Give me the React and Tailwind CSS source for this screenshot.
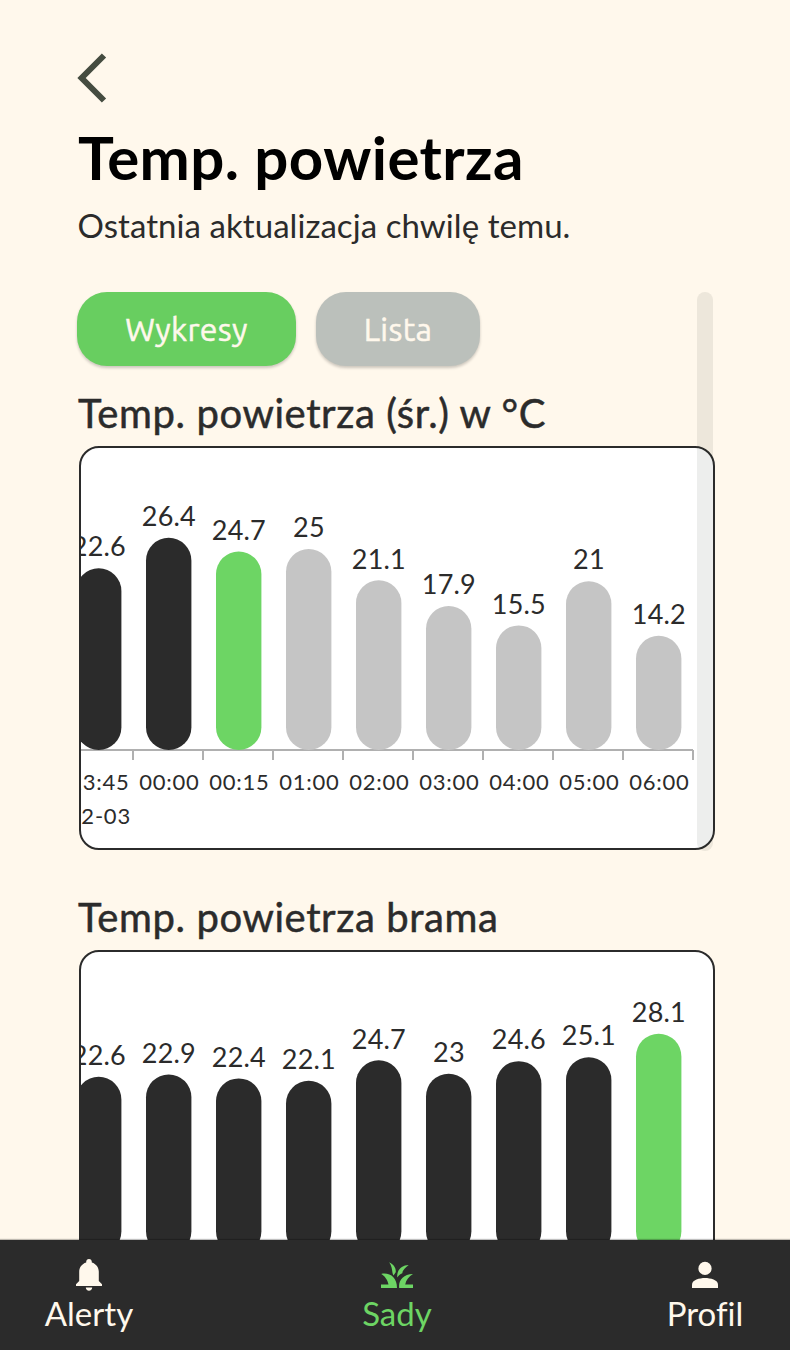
const DARK = '#2b2b2b';
const GREEN = '#6dd564';
const GREY = '#c5c5c5';

const averageTemps = [
  { value: 22.6, color: DARK, time: '23:45', date: '2022-03' },
  { value: 26.4, color: DARK, time: '00:00' },
  { value: 24.7, color: GREEN, time: '00:15' },
  { value: 25, color: GREY, time: '01:00' },
  { value: 21.1, color: GREY, time: '02:00' },
  { value: 17.9, color: GREY, time: '03:00' },
  { value: 15.5, color: GREY, time: '04:00' },
  { value: 21, color: GREY, time: '05:00' },
  { value: 14.2, color: GREY, time: '06:00' },
];

const gateTemps = [
  { value: 22.6, color: DARK },
  { value: 22.9, color: DARK },
  { value: 22.4, color: DARK },
  { value: 22.1, color: DARK },
  { value: 24.7, color: DARK },
  { value: 23, color: DARK },
  { value: 24.6, color: DARK },
  { value: 25.1, color: DARK },
  { value: 28.1, color: GREEN },
];

const BASE = 302;
const STEP = 70;

function BarChart({ data, max }) {
  return (
    <svg width="632" height="400" viewBox="0 0 632 400" className="block">
      <path d={`M0 ${BASE}H612`} stroke="#b0b0b0" strokeWidth="2" />
      {data.map((d, i) => {
        const cx = 17.7 + i * STEP;
        const h = (d.value / max) * 220.3;
        return (
          <g key={i} fill="#2b2b2b" textAnchor="middle">
            <path d={`M${52 + i * STEP} ${BASE}v10`} stroke="#b0b0b0" strokeWidth="2" />
            <rect x={cx - 22.7} y={BASE - h} width="45.4" height={h} rx="22.7" fill={d.color} />
            <text x={cx + 0.2} y={BASE - h - 11.8} className="text-[27px] tracking-[0.2px]">{d.value}</text>
            {d.time && <text x={cx + 0.7} y="342" className="text-[22px] tracking-[0.8px]">{d.time}</text>}
            {d.date && <text x={50} y="376" textAnchor="end" className="text-[22px] tracking-[0.8px]">{d.date}</text>}
          </g>
        );
      })}
    </svg>
  );
}

function ChartSection({ title, data, max }) {
  return (
    <section>
      <h2 className="h-[60px] pl-px text-[40px] leading-[54px] font-normal tracking-[0.59px] whitespace-nowrap [-webkit-text-stroke:0.5px_#2b2b2b]">{title}</h2>
      <div className="ml-[2px] h-[404px] w-[636px] overflow-hidden rounded-[20px] border-2 border-[#2b2b2b] bg-white">
        <BarChart data={data} max={max} />
      </div>
    </section>
  );
}

function NavItem({ label, active }) {
  return (
    <a className={`flex flex-col items-center ${active ? 'text-[#6dd564]' : 'text-[#fff8ec]'}`}>
      <svg width="40" height="40" viewBox="0 0 40 40" fill="currentColor">{ICONS[label]}</svg>
      <span className="-mt-[2px] text-[33px] leading-[40px] tracking-[0.02px] whitespace-nowrap">{label}</span>
    </a>
  );
}

const ICONS = {
  Alerty: (
    <path d="M20 4c-1.700 0-2.800 1.200-2.800 2.800v.7C12.800 8.800 10.200 12.500 10.200 17v9L7 29.300V31h26v-1.700L29.800 26v-9c0-4.500-2.600-8.200-7-9.500v-.7C22.800 5.200 21.700 4 20 4zM16.800 32.500h6.400c0 2-1.400 3.200-3.200 3.200s-3.200-1.200-3.200-3.200z" />
  ),
  Sady: (
    <path d="M4 29.400h7.500C10.600 24.500 7.500 20.800 4.200 18.900C13 17.300 20 22.500 20 33H4zM12.200 7.200C17.700 10 19.200 14 18.700 17.200L16.500 20.500C14.500 17.500 16 12.500 12.200 7.200zM20.200 20.800C20.300 14.500 25 10.200 31.700 10C27.500 13.500 25.500 15.500 25.300 18.200C23 19 21.500 20.500 20.200 22.500zM36 18.900C32 21.500 29 25 28.200 29.400h7.800V33H22.200C21.200 25.500 26 19 36 18.900z" />
  ),
  Profil: (
    <>
      <circle cx="20" cy="13.400" r="6.600" />
      <path d="M7 33v-3.500C7 25 14.500 23 20 23s13 2 13 6.500V33z" />
    </>
  ),
};

export default function App() {
  return (
    <div className="flex h-[1350px] w-[790px] flex-col overflow-hidden bg-[#fff8ec] font-['Lato',sans-serif] text-[#2b2b2b]">
      <main className="min-h-0 flex-1 overflow-hidden pl-[77px]">
        <header className="h-[292px] pt-[52px]">
          <svg width="32" height="52" viewBox="0 0 32 52" fill="none" stroke="#454c40" strokeWidth="6">
            <path d="M27 3.500L4.600 26L27 48.500" />
          </svg>
          <h1 className="mt-[17px] h-[72px] pl-px text-[60px] leading-[72px] font-bold tracking-[0.4px] whitespace-nowrap text-black">Temp. powietrza</h1>
          <p className="mt-[12px] pl-[0.5px] text-[33px] leading-[40px] tracking-[0.06px] whitespace-nowrap">Ostatnia aktualizacja chwilę temu.</p>
        </header>
        <div className="relative w-[638px]">
          <div className="flex h-[94px] gap-5 font-['Ubuntu','Noto_Sans',sans-serif] text-[32px] tracking-[0.3px] text-[#fff8ec] [-webkit-text-stroke:0.5px_#fff8ec]">
            <button className="h-[74px] w-[219px] rounded-[30px] bg-[#68ce60] shadow-[0_2px_3px_rgba(0,0,0,0.2)]">Wykresy</button>
            <button className="h-[74px] w-[164px] rounded-[30px] bg-[#bbc0bb] shadow-[0_2px_3px_rgba(0,0,0,0.2)]">Lista</button>
          </div>
          <ChartSection title="Temp. powietrza (śr.) w °C" data={averageTemps} max={27.4} />
          <div className="absolute top-0 left-[620px] h-[559px] w-4 rounded-full bg-[rgba(28,40,20,0.08)]" />
        </div>
        <div className="h-[40px]" />
        <ChartSection title="Temp. powietrza brama" data={gateTemps} max={28.1} />
      </main>
      <nav className="grid h-[110px] grid-cols-[88px_auto_76px] justify-items-center bg-[#2b2b2b] pr-[47px] pl-[45px] pt-[15px] shadow-[0_-1px_1px_rgba(0,0,0,0.25)]">
        <NavItem label="Alerty" />
        <div className="pr-[6px]">
          <NavItem label="Sady" active />
        </div>
        <NavItem label="Profil" />
      </nav>
    </div>
  );
}
